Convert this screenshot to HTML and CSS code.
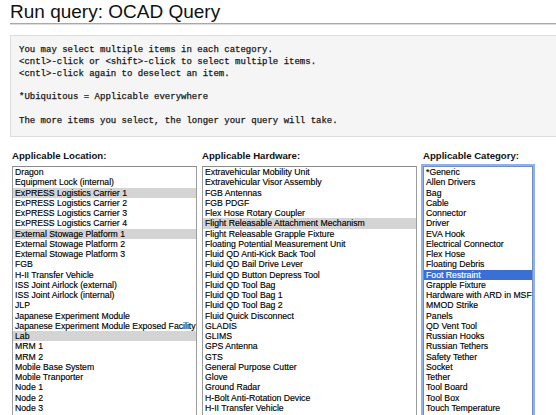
FILE: index.html
```html
<!DOCTYPE html>
<html>
<head>
<meta charset="utf-8">
<link rel="stylesheet" href="styles.css">
</head>
<body>
<div class="page">
  <h1 class="title">Run query: OCAD Query</h1>
  <pre class="note">You may select multiple items in each category.
&lt;cntl&gt;-click or &lt;shift&gt;-click to select multiple items.
&lt;cntl&gt;-click again to deselect an item.

*Ubiquitous = Applicable everywhere

The more items you select, the longer your query will take.</pre>
  <div class="columns">
    <div class="col col-location">
      <div class="label">Applicable Location:</div>
      <div class="listbox" role="listbox">
        <div class="opt">Dragon</div>
        <div class="opt">Equipment Lock (internal)</div>
        <div class="opt sel">ExPRESS Logistics Carrier 1</div>
        <div class="opt">ExPRESS Logistics Carrier 2</div>
        <div class="opt">ExPRESS Logistics Carrier 3</div>
        <div class="opt">ExPRESS Logistics Carrier 4</div>
        <div class="opt sel">External Stowage Platform 1</div>
        <div class="opt">External Stowage Platform 2</div>
        <div class="opt">External Stowage Platform 3</div>
        <div class="opt">FGB</div>
        <div class="opt">H-II Transfer Vehicle</div>
        <div class="opt">ISS Joint Airlock (external)</div>
        <div class="opt">ISS Joint Airlock (internal)</div>
        <div class="opt">JLP</div>
        <div class="opt">Japanese Experiment Module</div>
        <div class="opt">Japanese Experiment Module Exposed Facility</div>
        <div class="opt sel">Lab</div>
        <div class="opt">MRM 1</div>
        <div class="opt">MRM 2</div>
        <div class="opt">Mobile Base System</div>
        <div class="opt">Mobile Tranporter</div>
        <div class="opt">Node 1</div>
        <div class="opt">Node 2</div>
        <div class="opt">Node 3</div>
      </div>
    </div>
    <div class="col col-hardware">
      <div class="label">Applicable Hardware:</div>
      <div class="listbox" role="listbox">
        <div class="opt">Extravehicular Mobility Unit</div>
        <div class="opt">Extravehicular Visor Assembly</div>
        <div class="opt">FGB Antennas</div>
        <div class="opt">FGB PDGF</div>
        <div class="opt">Flex Hose Rotary Coupler</div>
        <div class="opt sel">Flight Releasable Attachment Mechanism</div>
        <div class="opt">Flight Releasable Grapple Fixture</div>
        <div class="opt">Floating Potential Measurement Unit</div>
        <div class="opt">Fluid QD Anti-Kick Back Tool</div>
        <div class="opt">Fluid QD Bail Drive Lever</div>
        <div class="opt">Fluid QD Button Depress Tool</div>
        <div class="opt">Fluid QD Tool Bag</div>
        <div class="opt">Fluid QD Tool Bag 1</div>
        <div class="opt">Fluid QD Tool Bag 2</div>
        <div class="opt">Fluid Quick Disconnect</div>
        <div class="opt">GLADIS</div>
        <div class="opt">GLIMS</div>
        <div class="opt">GPS Antenna</div>
        <div class="opt">GTS</div>
        <div class="opt">General Purpose Cutter</div>
        <div class="opt">Glove</div>
        <div class="opt">Ground Radar</div>
        <div class="opt">H-Bolt Anti-Rotation Device</div>
        <div class="opt">H-II Transfer Vehicle</div>
      </div>
    </div>
    <div class="col col-category">
      <div class="label">Applicable Category:</div>
      <div class="listbox focused" role="listbox">
        <div class="opt">*Generic</div>
        <div class="opt">Allen Drivers</div>
        <div class="opt">Bag</div>
        <div class="opt">Cable</div>
        <div class="opt">Connector</div>
        <div class="opt">Driver</div>
        <div class="opt">EVA Hook</div>
        <div class="opt">Electrical Connector</div>
        <div class="opt">Flex Hose</div>
        <div class="opt">Floating Debris</div>
        <div class="opt active">Foot Restraint</div>
        <div class="opt">Grapple Fixture</div>
        <div class="opt">Hardware with ARD in MSF</div>
        <div class="opt">MMOD Strike</div>
        <div class="opt">Panels</div>
        <div class="opt">QD Vent Tool</div>
        <div class="opt">Russian Hooks</div>
        <div class="opt">Russian Tethers</div>
        <div class="opt">Safety Tether</div>
        <div class="opt">Socket</div>
        <div class="opt">Tether</div>
        <div class="opt">Tool Board</div>
        <div class="opt">Tool Box</div>
        <div class="opt">Touch Temperature</div>
      </div>
    </div>
  </div>
</div>
</body>
</html>
```
FILE: styles.css
```css
html, body {
  margin: 0;
  padding: 0;
  overflow: hidden;
  background: #fff;
}
.page {
  width: 620px;
  padding: 1px 0 0 10px;
  font-family: "Liberation Sans", Arial, sans-serif;
  color: #111;
}
.title {
  margin: 0;
  font-size: 19px;
  line-height: 22px;
  font-weight: normal;
  border-bottom: 1px solid #a8a8a8;
  box-shadow: 0 1px 0 #dcdcdc;
}
.note {
  margin: 11px 0 0 0;
  padding: 9px 8px 8px 8px;
  border: 1px solid #dcdcdc;
  background: #f5f5f5;
  font-family: "Liberation Mono", "Courier New", monospace;
  font-size: 9px;
  line-height: 11.8px;
  color: #111;
  -webkit-text-stroke: 0.25px #222;
}
.columns {
  display: flex;
  margin-top: 13px;
  padding-left: 2px;
}
.col {
  display: flex;
  flex-direction: column;
}
.col-location { width: 185px; margin-right: 5px; }
.col-hardware { width: 215px; margin-right: 6px; }
.col-category { width: 110px; }
.label {
  font-weight: bold;
  font-size: 9.6px;
  line-height: 12px;
  margin-bottom: 4px;
  color: #111;
}
.listbox {
  height: 300px;
  overflow: hidden;
  border: 1px solid #9c9c9c;
  border-top-color: #8a8a8a;
  background: #fff;
  padding-top: 0.5px;
}
.listbox.focused {
  border-color: #6d8fc9;
  box-shadow: 0 0 0 2px #8fb2ec;
}
.opt {
  font-family: "Liberation Sans", Arial, sans-serif;
  font-size: 8.7px;
  line-height: 10.26px;
  height: 10.26px;
  padding-left: 2px;
  white-space: nowrap;
  color: #000;
  -webkit-text-stroke: 0.15px #000;
}
.opt.sel {
  background: #d4d4d4;
}
.opt.active {
  background: #3a6fd6;
  color: #fff;
  -webkit-text-stroke: 0.15px #fff;
}
```
